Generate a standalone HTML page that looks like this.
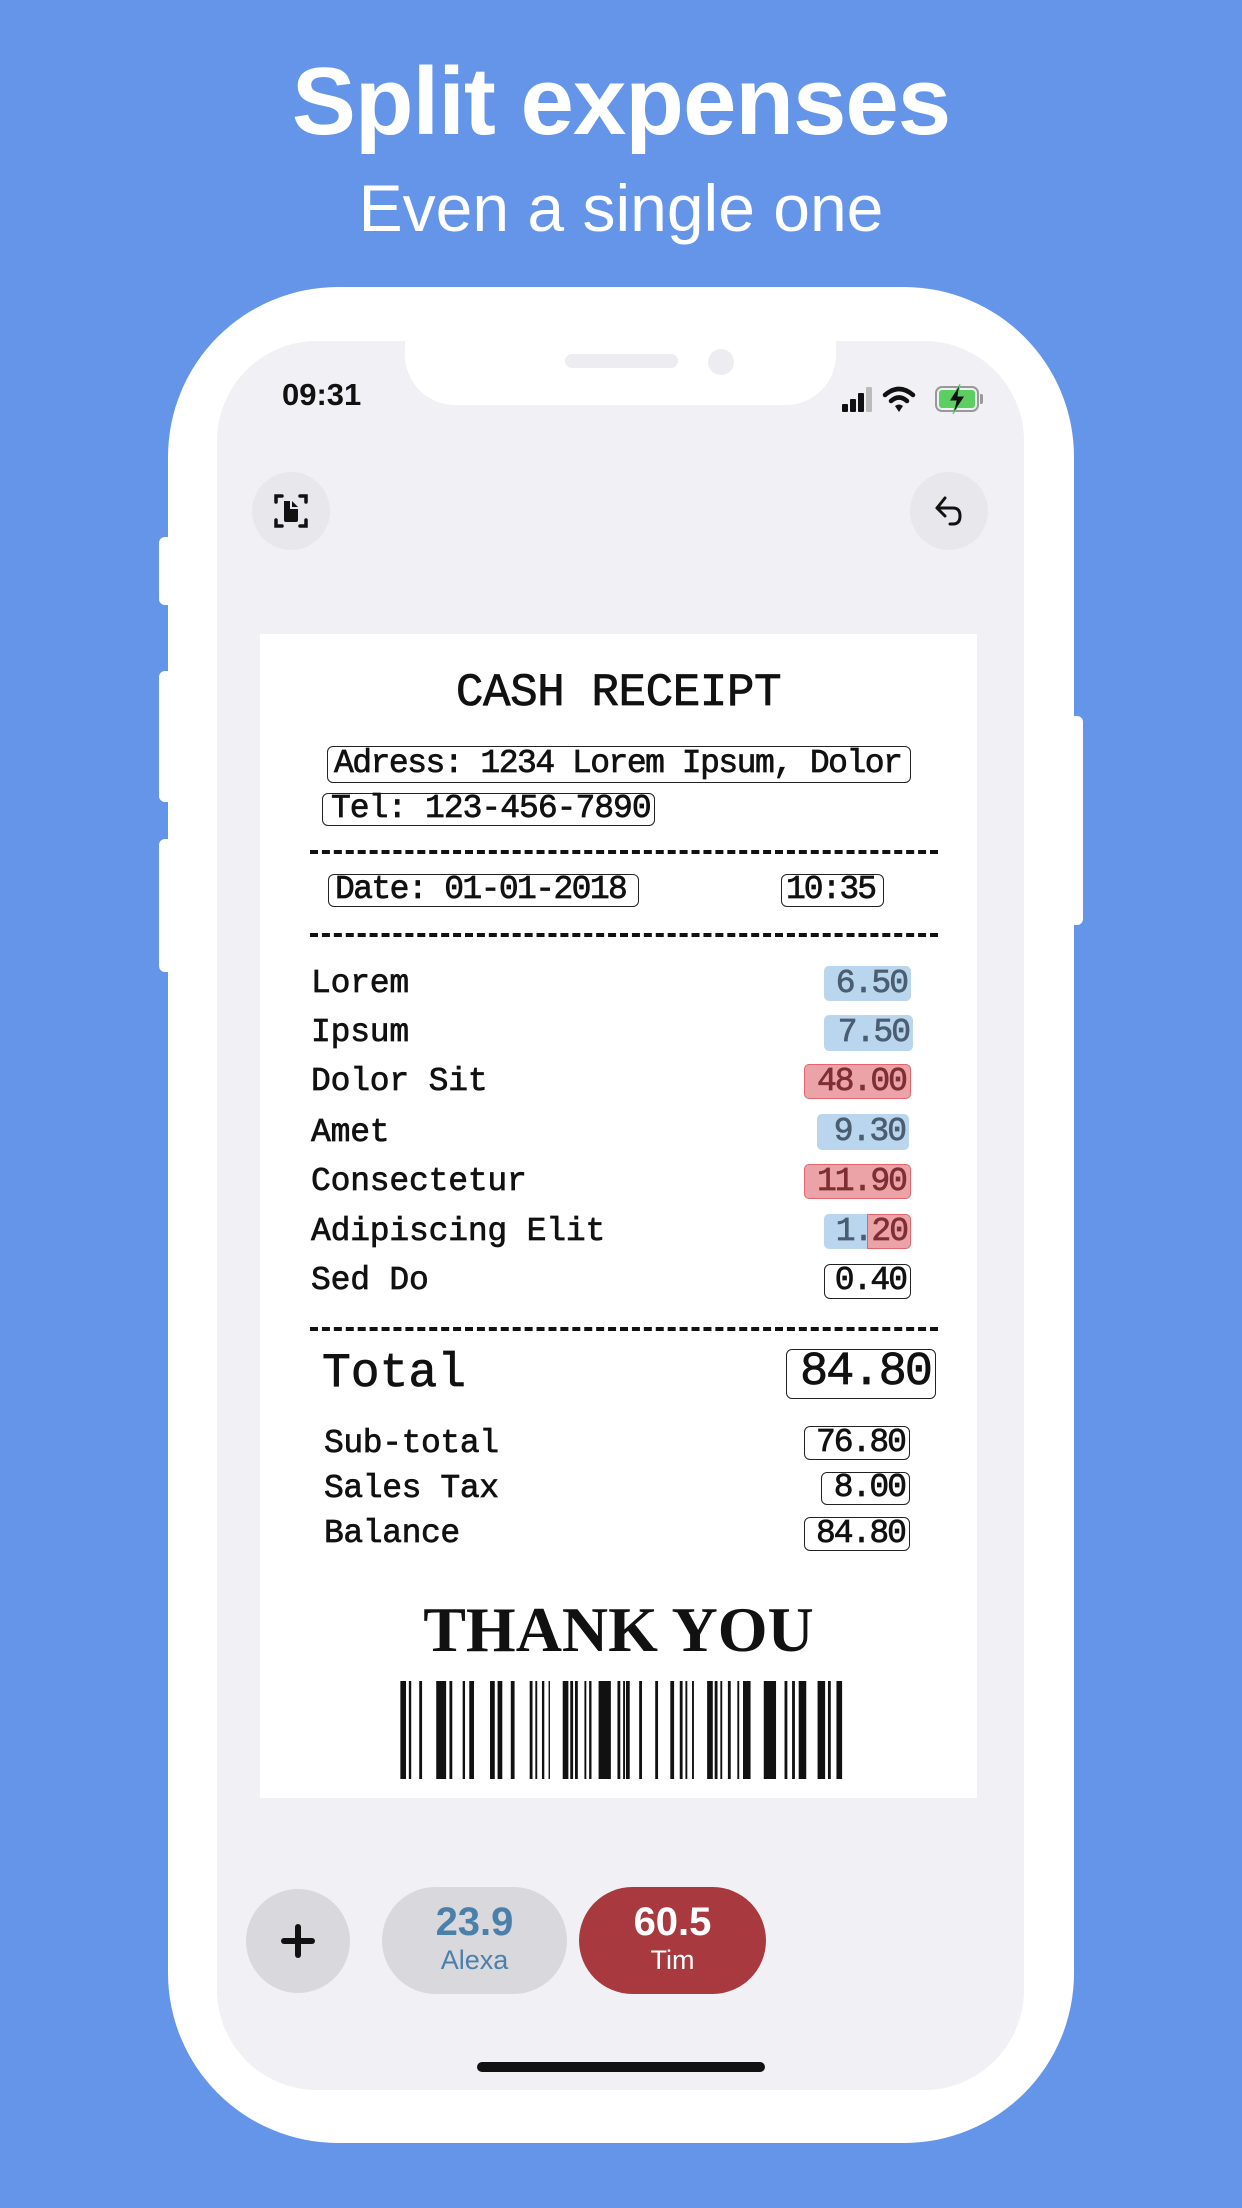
<!DOCTYPE html>
<html><head><meta charset="utf-8"><style>
*{margin:0;padding:0;box-sizing:border-box}
body{width:1242px;height:2208px;background:#6495e8;position:relative;overflow:hidden;font-family:"Liberation Sans",sans-serif}
.a{position:absolute}
.h1{left:0;width:1242px;top:46px;text-align:center;color:#fff;font-weight:bold;font-size:96px;line-height:112px;letter-spacing:-1px}
.h2{left:0;width:1242px;top:170px;text-align:center;color:#fff;font-size:66px;line-height:76px}
.phone{left:168px;top:287px;width:906px;height:1856px;background:#fff;border-radius:170px}
.btn{background:#fff;border-radius:6px}
.screen{left:217px;top:341px;width:807px;height:1749px;background:#f0f0f5;border-radius:100px;overflow:hidden}
.m{font-family:"Liberation Mono",monospace;color:#111;white-space:nowrap;-webkit-text-stroke:0.7px currentColor}
.box{border:1.5px solid #222;border-radius:6px}
.v{text-align:right;padding-right:4px}
.blue{background:#b9d6ee;color:#4b5d70;border-radius:5px}
.red{background:#eba3a8;color:#7e2f33;border:1.5px solid #e2656d;border-radius:5px}
.dash{height:0;border-top:4px dashed #111}
</style></head><body>
<div class="a h1">Split expenses</div>
<div class="a h2">Even a single one</div>

<div class="a btn" style="left:159px;top:537px;width:14px;height:68px"></div>
<div class="a btn" style="left:159px;top:671px;width:14px;height:131px"></div>
<div class="a btn" style="left:159px;top:839px;width:14px;height:133px"></div>
<div class="a btn" style="left:1069px;top:716px;width:14px;height:209px"></div>
<div class="a phone"></div>
<div class="a screen">
  <div class="a" style="left:188px;top:-10px;width:431px;height:74px;background:#fff;border-radius:0 0 50px 50px"></div>
  <div class="a" style="left:348px;top:13px;width:113px;height:14px;background:#ececf1;border-radius:7px"></div>
  <div class="a" style="left:491px;top:8px;width:26px;height:26px;background:#ececf1;border-radius:50%"></div>
  <div class="a" style="left:65px;top:36px;font-size:31px;font-weight:bold;color:#111">09:31</div>
  <div class="a" style="left:625px;top:63px;width:6px;height:8px;background:#111;border-radius:1px"></div>
  <div class="a" style="left:633px;top:58px;width:6px;height:13px;background:#111;border-radius:1px"></div>
  <div class="a" style="left:641px;top:52px;width:6px;height:19px;background:#111;border-radius:1px"></div>
  <div class="a" style="left:649px;top:46px;width:6px;height:25px;background:#bbb;border-radius:1px"></div>
  <svg class="a" style="left:665px;top:44px" width="34" height="28" viewBox="0 0 34 28"><path d="M3 10 Q17 -2 31 10" stroke="#111" stroke-width="4.5" fill="none" stroke-linecap="round"/><path d="M9 16 Q17 9 25 16" stroke="#111" stroke-width="4.5" fill="none" stroke-linecap="round"/><path d="M13 21 L17 27 L21 21 Q17 18 13 21Z" fill="#111"/></svg>
  <div class="a" style="left:718px;top:45px;width:44px;height:26px;border:2.5px solid #999;border-radius:7px;padding:2px"><div style="width:100%;height:100%;background:#5ccf62;border-radius:3px"></div></div>
  <div class="a" style="left:763px;top:53px;width:3px;height:10px;background:#999;border-radius:0 2px 2px 0"></div>
  <svg class="a" style="left:728px;top:42px" width="24" height="32" viewBox="0 0 24 32"><path d="M15 1 L4 18 L11 18 L8 31 L20 13 L13 13 Z" fill="#111" stroke="#5ccf62" stroke-width="1"/></svg>
  <div class="a" style="left:35px;top:131px;width:78px;height:78px;border-radius:50%;background:#e8e8ec"></div>
  <svg class="a" style="left:54px;top:150px" width="40" height="40" viewBox="0 0 40 40"><path d="M5 11 V5 H11 M29 5 H35 V11 M35 29 V35 H29 M11 35 H5 V29" stroke="#111" stroke-width="3.5" fill="none" stroke-linecap="round"/><path d="M13 10 H21 L27 16 V29 Q27 31 25 31 H15 Q13 31 13 29 Z" fill="#111"/><path d="M20 10 V17 H27" stroke="#e8e8ec" stroke-width="2" fill="none"/></svg>
  <div class="a" style="left:693px;top:131px;width:78px;height:78px;border-radius:50%;background:#e8e8ec"></div>
  <svg class="a" style="left:712px;top:150px" width="40" height="40" viewBox="0 0 40 40"><path d="M16 7 L8 17 L16 25" stroke="#111" stroke-width="3" fill="none" stroke-linecap="round" stroke-linejoin="round"/><path d="M8 17 H24 Q31 17 31 25 Q31 33 24 33 H21" stroke="#111" stroke-width="3" fill="none" stroke-linecap="round"/></svg>
  <div class="a" style="left:29px;top:1548px;width:104px;height:104px;border-radius:50%;background:#d9d9dd"></div>
  <div class="a" style="left:64px;top:1597px;width:34px;height:6px;background:#111;border-radius:3px"></div>
  <div class="a" style="left:78px;top:1583px;width:6px;height:34px;background:#111;border-radius:3px"></div>
  <div class="a" style="left:165px;top:1546px;width:185px;height:107px;border-radius:54px;background:#d9d9dd;text-align:center">
    <div style="color:#4b80aa;font-weight:bold;font-size:40px;line-height:44px;margin-top:13px">23.9</div>
    <div style="color:#4b80aa;font-size:27px;line-height:32px">Alexa</div></div>
  <div class="a" style="left:362px;top:1546px;width:187px;height:107px;border-radius:54px;background:#a8393e;text-align:center">
    <div style="color:#fff;font-weight:bold;font-size:40px;line-height:44px;margin-top:13px">60.5</div>
    <div style="color:#fff;font-size:27px;line-height:32px">Tim</div></div>
  <div class="a" style="left:260px;top:1721px;width:288px;height:10px;background:#111;border-radius:5px"></div>
</div>

<div class="a" style="left:260px;top:634px;width:717px;height:1164px;background:#fff"></div>
<div class="a m" style="left:260px;width:717px;top:665px;text-align:center;font-size:46px;line-height:56px;letter-spacing:-0.5px">CASH RECEIPT</div>
<div class="a m box" style="left:327px;top:746px;width:584px;height:37px;font-size:33px;line-height:34px;letter-spacing:-1.5px;padding-left:6px">Adress: 1234 Lorem Ipsum, Dolor</div>
<div class="a m box" style="left:322px;top:793px;width:333px;height:33px;font-size:33px;line-height:30px;letter-spacing:-1px;padding-left:8px">Tel: 123-456-7890</div>
<div class="a dash" style="left:310px;top:850px;width:628px"></div>
<div class="a m box" style="left:328px;top:874px;width:311px;height:33px;font-size:33px;line-height:30px;letter-spacing:-1.6px;padding-left:6px">Date: 01-01-2018</div>
<div class="a m box" style="left:781px;top:874px;width:103px;height:33px;font-size:33px;line-height:30px;letter-spacing:-2px;padding-left:4px">10:35</div>
<div class="a dash" style="left:310px;top:933px;width:628px"></div>

<div class="a m" style="left:311px;top:963px;font-size:33px;line-height:42px;letter-spacing:-0.2px">Lorem</div>
<div class="a m" style="left:311px;top:1012px;font-size:33px;line-height:42px;letter-spacing:-0.2px">Ipsum</div>
<div class="a m" style="left:311px;top:1061px;font-size:33px;line-height:42px;letter-spacing:-0.2px">Dolor Sit</div>
<div class="a m" style="left:311px;top:1112px;font-size:33px;line-height:42px;letter-spacing:-0.2px">Amet</div>
<div class="a m" style="left:311px;top:1161px;font-size:33px;line-height:42px;letter-spacing:-0.2px">Consectetur</div>
<div class="a m" style="left:311px;top:1211px;font-size:33px;line-height:42px;letter-spacing:-0.2px">Adipiscing Elit</div>
<div class="a m" style="left:311px;top:1260px;font-size:33px;line-height:42px;letter-spacing:-0.2px">Sed Do</div>

<div class="a m v blue" style="left:824px;top:966px;width:87px;height:35px;font-size:33px;line-height:35px;letter-spacing:-2px">6.50</div>
<div class="a m v blue" style="left:824px;top:1015px;width:89px;height:36px;font-size:33px;line-height:36px;letter-spacing:-2px">7.50</div>
<div class="a m v red" style="left:804px;top:1064px;width:107px;height:35px;font-size:33px;line-height:33px;letter-spacing:-2px">48.00</div>
<div class="a m v blue" style="left:817px;top:1114px;width:92px;height:36px;font-size:33px;line-height:36px;letter-spacing:-2px">9.30</div>
<div class="a m v red" style="left:804px;top:1164px;width:107px;height:35px;font-size:33px;line-height:33px;letter-spacing:-2px">11.90</div>
<div class="a blue" style="left:824px;top:1214px;width:50px;height:35px"></div>
<div class="a red" style="left:867px;top:1214px;width:44px;height:35px;border-radius:0 5px 5px 0"></div>
<div class="a m v" style="left:824px;top:1214px;width:87px;height:35px;font-size:33px;line-height:35px;letter-spacing:-2px;color:#4b5d70">1.<span style="color:#7e2f33">20</span></div>
<div class="a m v box" style="left:824px;top:1264px;width:87px;height:35px;font-size:33px;line-height:32px;letter-spacing:-2px">0.40</div>

<div class="a dash" style="left:310px;top:1327px;width:628px"></div>
<div class="a m" style="left:322px;top:1346px;font-size:48px;line-height:56px;letter-spacing:0px">Total</div>
<div class="a m v box" style="left:786px;top:1349px;width:150px;height:50px;font-size:47px;line-height:46px;letter-spacing:-2px">84.80</div>

<div class="a m" style="left:324px;top:1424px;font-size:33px;line-height:40px;letter-spacing:-0.4px">Sub-total</div>
<div class="a m" style="left:324px;top:1469px;font-size:33px;line-height:40px;letter-spacing:-0.4px">Sales Tax</div>
<div class="a m" style="left:324px;top:1514px;font-size:33px;line-height:40px;letter-spacing:-0.4px">Balance</div>
<div class="a m v box" style="left:804px;top:1426px;width:106px;height:34px;font-size:33px;line-height:31px;letter-spacing:-2px">76.80</div>
<div class="a m v box" style="left:821px;top:1472px;width:89px;height:33px;font-size:33px;line-height:30px;letter-spacing:-2px">8.00</div>
<div class="a m v box" style="left:804px;top:1517px;width:106px;height:34px;font-size:33px;line-height:31px;letter-spacing:-2px">84.80</div>

<div class="a" style="left:260px;width:717px;top:1592px;text-align:center;font-family:'Liberation Serif',serif;font-size:64px;line-height:76px;font-weight:bold;color:#111;letter-spacing:0px">THANK YOU</div>
<svg class="a" style="left:398px;top:1681px" width="446" height="98" viewBox="335 0 945 100" preserveAspectRatio="none" fill="#111">
<rect x="340" width="12" height="100"/><rect x="358" width="5" height="100"/><rect x="380" width="6" height="100"/><rect x="416" width="21" height="100"/><rect x="444" width="6" height="100"/><rect x="472" width="5" height="100"/><rect x="486" width="10" height="100"/><rect x="530" width="10" height="100"/><rect x="546" width="10" height="100"/><rect x="574" width="8" height="100"/><rect x="614" width="6" height="100"/><rect x="626" width="4" height="100"/><rect x="640" width="5" height="100"/><rect x="654" width="3" height="100"/><rect x="684" width="12" height="100"/><rect x="700" width="6" height="100"/><rect x="710" width="6" height="100"/><rect x="730" width="4" height="100"/><rect x="740" width="5" height="100"/><rect x="760" width="26" height="100"/><rect x="800" width="6" height="100"/><rect x="812" width="4" height="100"/><rect x="818" width="8" height="100"/><rect x="846" width="6" height="100"/><rect x="880" width="6" height="100"/><rect x="912" width="8" height="100"/><rect x="932" width="6" height="100"/><rect x="944" width="4" height="100"/><rect x="958" width="4" height="100"/><rect x="990" width="12" height="100"/><rect x="1006" width="6" height="100"/><rect x="1018" width="4" height="100"/><rect x="1034" width="6" height="100"/><rect x="1054" width="4" height="100"/><rect x="1066" width="16" height="100"/><rect x="1110" width="26" height="100"/><rect x="1154" width="6" height="100"/><rect x="1170" width="6" height="100"/><rect x="1184" width="16" height="100"/><rect x="1224" width="16" height="100"/><rect x="1246" width="6" height="100"/><rect x="1264" width="12" height="100"/>
</svg>
</body></html>
